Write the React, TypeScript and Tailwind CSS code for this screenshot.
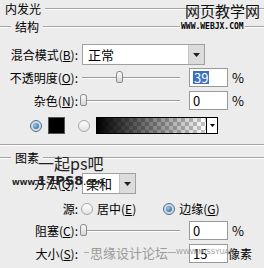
import React from "react";

const Line = ({ className = "" }: { className?: string }) => (
  <div className={`h-[2px] border-t border-[#a5a5a5] border-b border-b-white ${className}`} />
);

const Label = ({ children }: { children: React.ReactNode }) => (
  <div className="w-[78px] shrink-0 text-right whitespace-nowrap">{children}</div>
);

const Arrow = () => (
  <div className="w-[16px] h-full bg-[#dcdcdc] border-l border-[#c4c4c4] flex items-center justify-center">
    <svg width="7" height="4" viewBox="0 0 7 4">
      <path d="M0 0h7L3.5 4z" fill="#222" />
    </svg>
  </div>
);

const Slider = ({ pos }: { pos: number }) => (
  <div className="w-[106px] shrink-0 relative h-full flex items-center pl-[4px]">
    <div className="w-[98px] h-[2px] border-t border-[#9c9c9c] border-b border-b-white" />
    <div
      className="absolute top-[3px] w-[7px] h-[12px] rounded-t-[3px] rounded-b-[2px] border border-[#8a8a8a] bg-[linear-gradient(#fafafa,#d6d6d6)]"
      style={{ left: pos }}
    />
  </div>
);

const NumBox = ({ children }: { children: React.ReactNode }) => (
  <div className="ml-[5px] w-[39px] h-[19px] bg-white border border-[#9a9a9a] flex items-center pl-[3px] text-[13px]">
    {children}
  </div>
);

const Radio = ({ on }: { on?: boolean }) => (
  <div
    className={`w-[12px] h-[12px] rounded-full border flex items-center justify-center ${
      on ? "border-[#4f6f8f] bg-[#cfdbe6]" : "border-[#a8a8a8] bg-[linear-gradient(#fdfdfd,#e3e3e3)]"
    }`}
  >
    {on && <div className="w-[6px] h-[6px] rounded-full bg-[radial-gradient(circle_at_35%_35%,#9cc6ea,#1f5a8c)]" />}
  </div>
);

export default function App() {
  return (
    <div className="w-[264px] h-[268px] bg-[#ececec] overflow-hidden relative flex flex-col text-[12px] leading-none text-black font-['Noto_Sans_CJK_SC',sans-serif]">
      {/* 内发光 */}
      <div className="h-[18px] flex items-center pl-[5px]">
        <span>内发光</span>
        <Line className="flex-1 ml-[4px]" />
      </div>

      {/* 结构 */}
      <div className="h-[18px] flex items-center">
        <Line className="w-[11px]" />
        <span className="ml-[4px]">结构</span>
        <Line className="flex-1 ml-[4px]" />
      </div>

      <div className="mt-[8px] h-[21px] flex items-center">
        <Label>
          混合模式(<u>B</u>):
        </Label>
        <div className="ml-[4px] w-[123px] h-[21px] bg-white border border-[#a0a0a0] flex items-center">
          <span className="flex-1 pl-[5px] text-[13px]">正常</span>
          <Arrow />
        </div>
      </div>

      <div className="mt-[3px] h-[19px] flex items-center">
        <Label>
          不透明度(<u>O</u>):
        </Label>
        <Slider pos={38} />
        <NumBox>
          <span className="bg-[#3a6fc4] text-white px-px">39</span>
        </NumBox>
        <span className="ml-[4px] text-[13px]">%</span>
      </div>

      <div className="mt-[4px] h-[19px] flex items-center">
        <Label>
          杂色(<u>N</u>):
        </Label>
        <Slider pos={2} />
        <NumBox>0</NumBox>
        <span className="ml-[4px] text-[13px]">%</span>
      </div>

      <div className="mt-[7px] h-[17px] flex items-center">
        <div className="ml-[30px]">
          <Radio on />
        </div>
        <div className="ml-[6px] w-[17px] h-[17px] bg-black border border-[#555]" />
        <div className="ml-[13px]">
          <Radio />
        </div>
        <div className="ml-[6px] w-[122px] h-[17px] border border-black flex">
          <div className="flex-1 bg-[repeating-conic-gradient(#c6c6c6_0_25%,#ffffff_0_50%)] bg-size-[8px_8px]">
            <div className="w-full h-full bg-linear-to-r from-black to-transparent" />
          </div>
          <div className="w-[11px] bg-white border-l border-black flex items-center justify-center">
            <svg width="5" height="3" viewBox="0 0 5 3">
              <path d="M0 0h5L2.5 3z" fill="#000" />
            </svg>
          </div>
        </div>
      </div>

      <Line className="mt-[10px]" />

      {/* 图素 */}
      <div className="mt-[5px] h-[14px] flex items-center">
        <Line className="w-[11px]" />
        <span className="ml-[4px]">图素</span>
        <Line className="flex-1 ml-[4px]" />
      </div>

      <div className="mt-[8px] h-[21px] flex items-center">
        <Label>
          方法(<u>Q</u>):
        </Label>
        <div className="ml-[4px] w-[54px] h-[21px] bg-white border border-[#a0a0a0] flex items-center">
          <span className="flex-1 pl-[3px] text-[13px]">柔和</span>
          <Arrow />
        </div>
      </div>

      <div className="mt-[8px] h-[14px] flex items-center">
        <Label>源:</Label>
        <div className="ml-[3px]">
          <Radio />
        </div>
        <span className="ml-[4px] whitespace-nowrap">
          居中(<u>E</u>)
        </span>
        <div className="ml-[27px]">
          <Radio on />
        </div>
        <span className="ml-[4px] whitespace-nowrap">
          边缘(<u>G</u>)
        </span>
      </div>

      <div className="mt-[5px] h-[19px] flex items-center">
        <Label>
          阻塞(<u>C</u>):
        </Label>
        <Slider pos={2} />
        <NumBox>0</NumBox>
        <span className="ml-[4px] text-[13px]">%</span>
      </div>

      <div className="mt-[4px] h-[19px] flex items-center">
        <Label>
          大小(<u>S</u>):
        </Label>
        <div className="w-[106px]" />
        <NumBox>15</NumBox>
        <span className="whitespace-nowrap">像素</span>
      </div>

      {/* watermarks */}
      <div className="absolute left-[185px] top-[3px] whitespace-nowrap text-[15px] leading-none text-[#111]">网页教学网</div>
      <div className="absolute left-[180px] top-[23px] whitespace-nowrap px-[1px] bg-[#ececec] text-[8px] font-bold font-['DejaVu_Sans_Mono',monospace]">
        WWW.WEBJX.COM
      </div>
      <div className="absolute left-[38px] top-[155px] whitespace-nowrap text-[16px] text-[#222]">一起ps吧</div>
      <div className="absolute left-[12px] top-[174px] whitespace-nowrap flex items-end font-['DejaVu_Sans',sans-serif] font-bold text-[#222]">
        <span className="text-[7px]">WWW.</span>
        <span className="text-[13px] leading-none">17PS8</span>
        <span className="text-[7px]">.COM</span>
      </div>
      <div className="absolute left-[84px] top-[246px] whitespace-nowrap flex items-center text-[#9b9b9b]">
        <span className="w-[5px] h-px bg-[#aaa] mr-[1px]" />
        <span className="text-[13px]">思缘设计论坛</span>
        <span className="w-[8px] h-px bg-[#aaa]" />
        <span className="text-[7px] font-['DejaVu_Sans',sans-serif]">WWW.MISSYUAN</span>
      </div>
    </div>
  );
}
